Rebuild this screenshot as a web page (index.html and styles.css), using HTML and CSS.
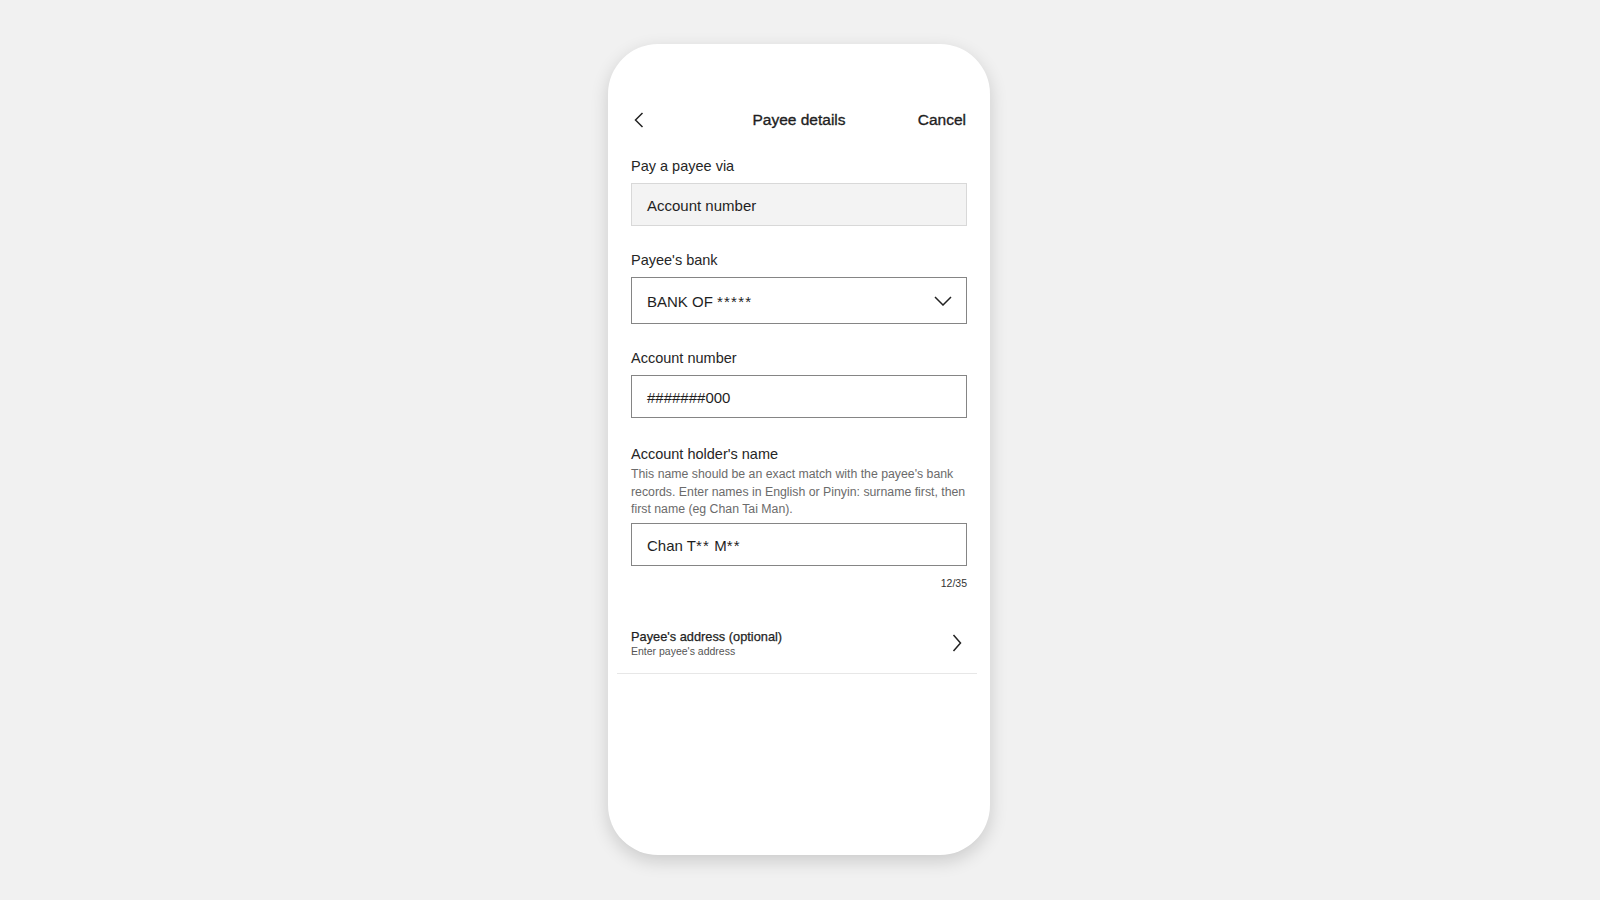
FILE: index.html
```html
<!DOCTYPE html>
<html lang="en">
<head>
<meta charset="utf-8">
<title>Payee details</title>
<link rel="stylesheet" href="styles.css">
</head>
<body>
<div class="phone">
  <div class="content">
    <header class="header">
      <span class="back">
        <svg width="10" height="16" viewBox="0 0 10 16"><polyline points="8.5,1 1.5,8 8.5,15" fill="none" stroke="#222" stroke-width="1.5"/></svg>
      </span>
      <span class="title">Payee details</span>
      <span class="cancel">Cancel</span>
    </header>

    <div class="field first">
      <div class="label">Pay a payee via</div>
      <div class="box readonly"><span>Account number</span></div>
    </div>

    <div class="field">
      <div class="label">Payee's bank</div>
      <div class="box select">
        <span>BANK OF <span class="mask">*****</span></span>
        <svg class="caret" width="18" height="10" viewBox="0 0 18 10"><polyline points="1,1 9,9 17,1" fill="none" stroke="#222" stroke-width="1.5"/></svg>
      </div>
    </div>

    <div class="field">
      <div class="label">Account number</div>
      <div class="box input"><span>#######000</span></div>
    </div>

    <div class="field holder">
      <div class="label">Account holder's name</div>
      <div class="help">This name should be an exact match with the payee's bank<br>records. Enter names in English or Pinyin: surname first, then<br>first name (eg Chan Tai Man).</div>
      <div class="box input"><span>Chan T<span class="mask">**</span> M<span class="mask">**</span></span></div>
      <div class="counter">12/35</div>
    </div>

    <div class="row">
      <div class="row-text">
        <div class="row-title">Payee's address (optional)</div>
        <div class="row-sub">Enter payee's address</div>
      </div>
      <svg width="10" height="18" viewBox="0 0 10 18"><polyline points="1.5,1 8.5,9 1.5,17" fill="none" stroke="#222" stroke-width="1.5"/></svg>
    </div>
  </div>
</div>
</body>
</html>
```
FILE: styles.css
```css
* { box-sizing: border-box; }
html, body { margin: 0; padding: 0; }
body {
  background: #f1f1f1;
  font-family: "Liberation Sans", Arial, sans-serif;
  color: #1f1f1f;
  height: 900px;
  overflow: hidden;
}
.phone {
  width: 382px;
  height: 811px;
  margin: 44px 0 0 608px;
  background: #fff;
  border-radius: 50px;
  box-shadow: 0 6px 18px rgba(0, 0, 0, 0.16);
  padding-top: 60px;
}
.content { padding: 0 23px; }
.header {
  height: 32px;
  display: grid;
  grid-template-columns: 1fr auto 1fr;
  align-items: center;
}
.back { display: flex; align-items: center; padding-left: 3px; margin-top: -1px; }
.title, .cancel {
  font-size: 15.5px;
  line-height: 32px;
  -webkit-text-stroke: 0.35px #1f1f1f;
}
.cancel { justify-self: end; padding-right: 1px; }

.field { margin-top: 24px; }
.field.first { margin-top: 20px; }
.field.holder { margin-top: 26px; }
.label {
  font-size: 14.5px;
  line-height: 20px;
  color: #262626;
  margin-bottom: 7px;
}
.box {
  height: 43px;
  display: flex;
  align-items: center;
  padding: 2px 15px 0;
  font-size: 15px;
  color: #1f1f1f;
  border: 1px solid #858585;
}
.mask { letter-spacing: 1.2px; }
.box.readonly {
  background: #f3f3f3;
  border-color: #d8d8d8;
}
.box.select {
  height: 47px;
  justify-content: space-between;
  padding-right: 14px;
}
.caret { margin-top: -2px; }
.help {
  font-size: 12.3px;
  line-height: 17.5px;
  color: #6b6b6b;
  margin-top: -5px;
  margin-bottom: 4px;
  white-space: nowrap;
}
.counter {
  text-align: right;
  font-size: 10.5px;
  line-height: 14px;
  margin-top: 10px;
  color: #333;
}
.row {
  margin: 24px -10px 0 -14px;
  padding: 15px 15px 15px 14px;
  border-bottom: 1px solid #e7e7e7;
  display: flex;
  align-items: center;
  justify-content: space-between;
}
.row-title {
  font-size: 12.8px;
  line-height: 15px;
  -webkit-text-stroke: 0.25px #1f1f1f;
}
.row-sub {
  font-size: 10.5px;
  line-height: 14px;
  color: #555;
}
```
